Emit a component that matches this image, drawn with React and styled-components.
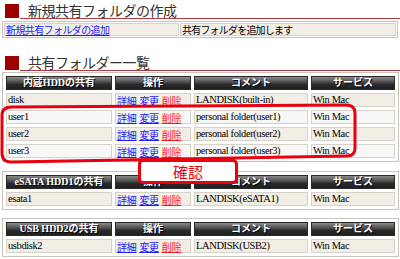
import React from 'react'
import styled, { createGlobalStyle } from 'styled-components'

const GlobalStyle = createGlobalStyle`
  * { box-sizing: border-box; }
  body {
    margin: 0;
    background: #fff;
    font-family: "Liberation Serif", "Noto Sans CJK JP", serif;
  }
`

const Page = styled.div`
  position: relative;
  width: 400px;
  height: 259px;
  padding: 2px 0 0 2px;
  overflow: hidden;
`

const Title = styled.div`
  display: flex;
  align-items: flex-end;
  height: 17px;
  margin-top: ${p => p.$top || 0}px;
`

const Mark = styled.span`
  width: 14px;
  height: 14px;
  margin-left: 3px;
  margin-bottom: 1px;
  background: #9c0000;
`

const TitleText = styled.h2`
  flex: 1;
  margin: 0 0 0 1px;
  padding-left: 8px;
  height: 17px;
  border-bottom: 1px solid #b23a3a;
  font: normal 14px/17px "Noto Sans CJK JP", sans-serif;
  letter-spacing: -0.5px;
  color: #333;
`

const Table = styled.table`
  width: 396px;
  table-layout: fixed;
  border-collapse: separate;
  border-spacing: ${p => p.$spacing ?? 3}px;
  border: 1px solid #c8c4bc;
  margin-top: ${p => p.$top || 0}px;
`

const Head = styled.th`
  padding: 0;
  border: 1px solid #2a2a2a;
  background: linear-gradient(to bottom, #8a8a8a 0%, #4a4a4a 45%, #2c2c2c 60%, #1e1e1e 100%);
  color: #fff;
  font: bold 10px/12px "Liberation Serif", "Noto Sans CJK JP", serif;
  text-shadow: 1px 1px 0 #000;
  white-space: nowrap;
`

const Cell = styled.td`
  padding: 0 1px;
  border: 1px solid #d6d2ca;
  background: ${p => (p.$tone === 'light' ? '#f7f7f7' : '#f3eee5')};
  font: 10.5px/12px "Liberation Serif", "Noto Sans CJK JP", serif;
  letter-spacing: -0.4px;
  color: #000;
  white-space: nowrap;
`

const Box = styled.div`
  display: flex;
  align-items: center;
  justify-content: ${p => (p.$center ? 'center' : 'flex-start')};
  gap: 3px;
  height: ${p => p.$h || 12}px;
`

const JpText = styled.span`
  font: 10px/11px "Noto Sans CJK JP", sans-serif;
  letter-spacing: -0.8px;
`

const Link = styled.a`
  font: 10px/11px "Noto Sans CJK JP", sans-serif;
  letter-spacing: ${p => (p.$tight ? '-0.6px' : '-0.3px')};
  color: ${p => (p.$danger ? '#ff1a1a' : '#1a1aff')};
  text-decoration: underline;
  cursor: pointer;
`

const Highlight = styled.svg`
  position: absolute;
  left: 0;
  top: 0;
  pointer-events: none;
`

const Confirm = styled.div`
  position: absolute;
  left: 138px;
  top: 159px;
  width: 100px;
  height: 25px;
  display: flex;
  align-items: center;
  justify-content: center;
  background: #fff;
  border: 3px solid #e8000e;
  border-radius: 5px;
  color: #e8000e;
  font: 15px/1 "Noto Sans CJK JP", sans-serif;
`

const Cols = () => (
  <colgroup>
    <col style={{ width: 106 }} />
    <col style={{ width: 76 }} />
    <col style={{ width: 114 }} />
    <col style={{ width: 84 }} />
  </colgroup>
)

const ShareTable = ({ title, rows, top }) => (
  <Table $top={top}>
    <Cols />
    <thead>
      <tr>
        {[title, '操作', 'コメント', 'サービス'].map(h => (
          <Head key={h}>
            <Box $center>{h}</Box>
          </Head>
        ))}
      </tr>
    </thead>
    <tbody>
      {rows.map(r => (
        <tr key={r.name}>
          <Cell $tone={r.tone}>
            <Box>{r.name}</Box>
          </Cell>
          <Cell $tone={r.tone}>
            <Box>
              <Link>詳細</Link>
              <Link>変更</Link>
              <Link $danger>削除</Link>
            </Box>
          </Cell>
          <Cell $tone={r.tone}>
            <Box>{r.comment}</Box>
          </Cell>
          <Cell $tone={r.tone}>
            <Box>Win Mac</Box>
          </Cell>
        </tr>
      ))}
    </tbody>
  </Table>
)

const internal = [
  { name: 'disk', comment: 'LANDISK(built-in)', tone: 'beige' },
  { name: 'user1', comment: 'personal folder(user1)', tone: 'light' },
  { name: 'user2', comment: 'personal folder(user2)', tone: 'beige' },
  { name: 'user3', comment: 'personal folder(user3)', tone: 'light' },
]

const esata = [{ name: 'esata1', comment: 'LANDISK(eSATA1)', tone: 'beige' }]
const usb = [{ name: 'usbdisk2', comment: 'LANDISK(USB2)', tone: 'beige' }]

export default function App() {
  return (
    <>
      <GlobalStyle />
      <Page>
        <Title>
          <Mark />
          <TitleText>新規共有フォルダの作成</TitleText>
        </Title>
        <Table $top={2} $spacing={1}>
          <colgroup>
            <col style={{ width: 175 }} />
            <col />
          </colgroup>
          <tbody>
            <tr>
              <Cell>
                <Box $h={11}>
                  <Link $tight>新規共有フォルダの追加</Link>
                </Box>
              </Cell>
              <Cell>
                <Box $h={11}>
                  <JpText>共有フォルダを追加します</JpText>
                </Box>
              </Cell>
            </tr>
          </tbody>
        </Table>

        <Title $top={16}>
          <Mark />
          <TitleText>共有フォルダー一覧</TitleText>
        </Title>
        <ShareTable title="内蔵HDDの共有" rows={internal} top={1} />
        <ShareTable title="eSATA HDD1の共有" rows={esata} top={9} />
        <ShareTable title="USB HDD2の共有" rows={usb} top={8} />

        <Highlight width="400" height="259">
          <path
            d="M12 107 L346 105 Q355 105 355 113 L355 148 Q355 156 347 156 L11 162 Q2 162 2 153 L2 115 Q2 107 12 107 Z"
            fill="none"
            stroke="#e8000e"
            strokeWidth="3"
          />
        </Highlight>
        <Confirm>確認</Confirm>
      </Page>
    </>
  )
}
